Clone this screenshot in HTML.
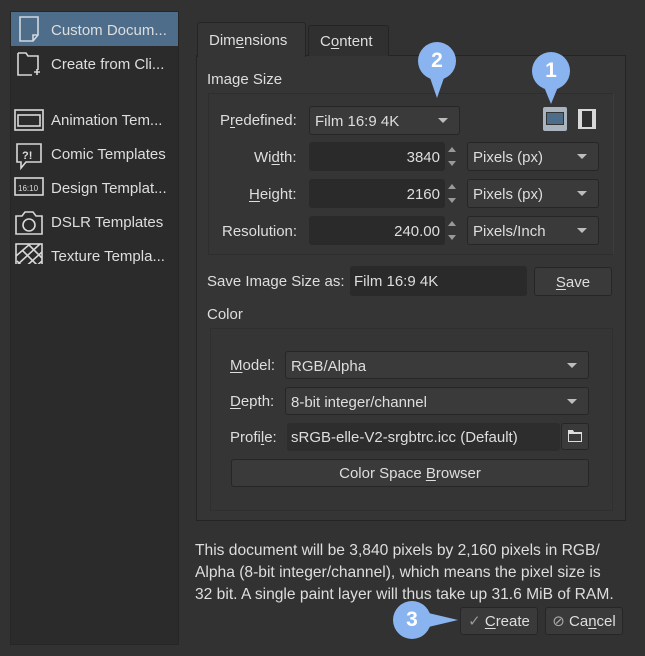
<!DOCTYPE html>
<html><head><meta charset="utf-8"><style>
*{box-sizing:border-box;margin:0;padding:0}
body{width:645px;height:656px;background:#323232;font-family:"Liberation Sans","DejaVu Sans",sans-serif;font-size:15px;color:#dedede;position:relative;overflow:hidden}
.a{position:absolute}
.t{position:absolute;white-space:nowrap;line-height:20px;margin-top:2px}
.inp{position:absolute;background:#2a2a2a;border-radius:3px}
.cmb{position:absolute;background:#3a3a3a;border:1px solid #262626;border-radius:3px;padding-left:5px;line-height:29px;white-space:nowrap}
.cmb:after{content:"";position:absolute;right:11px;top:11px;border-left:5px solid transparent;border-right:5px solid transparent;border-top:5px solid #bdbdbd}
.btn{position:absolute;background:#3a3a3a;border:1px solid #262626;border-radius:3px;text-align:center;line-height:28px}
.spin{position:absolute;width:14px;background:#353535}
.spin:before{content:"";position:absolute;left:3px;top:5px;border-left:4px solid transparent;border-right:4px solid transparent;border-bottom:5px solid #999}
.spin:after{content:"";position:absolute;left:3px;bottom:5px;border-left:4px solid transparent;border-right:4px solid transparent;border-top:5px solid #999}
u{text-decoration:underline;text-underline-offset:2px}
.lt{position:absolute;left:51px;white-space:nowrap;line-height:20px;margin-top:2px}
.callout{position:absolute;width:38px;height:38px;border-radius:50%;background:#8ab4f0;color:#fff;font-weight:bold;font-size:21px;text-align:center;line-height:38px}
</style></head><body>
<div class="a" style="left:10px;top:11px;width:169px;height:634px;background:#2b2b2b;border:1px solid #262626"></div>
<div class="a" style="left:11px;top:12px;width:167px;height:34px;background:#4d6d8a"></div>
<svg class="a" style="left:14px;top:14px" width="30" height="250" viewBox="0 0 30 250" fill="none" stroke="#d8d8d8" stroke-width="1.6">
<path d="M6 3h18v18l-5 6H6z" stroke="#d0d8e0"/><path d="M24 21h-5v6" stroke="#d0d8e0"/>
<path d="M4 39h8l2 3h10v14M4 39v22h14M20 58h6M23 55v6"/>
<rect x="1" y="96" width="28" height="20"/><rect x="4" y="101" width="22" height="11"/>
<path d="M3 130h24v18H12l-5 6v-6H3z"/><text x="8" y="145" font-size="11" fill="#ddd" stroke="none" font-weight="bold" font-family="Liberation Sans">?!</text>
<rect x="1" y="164" width="28" height="17"/><text x="4" y="177" font-size="8" fill="#ddd" stroke="none" font-family="Liberation Sans">16:10</text>
<path d="M2 202h6l3-4h8l3 4h6v18H2z"/><circle cx="15" cy="211" r="6"/>
<rect x="2" y="230" width="26" height="26"/><path d="M2 242l14-12M2 252l24-22M8 256l20-18M18 256l10-9M8 236l18 18M3 247l9 9M14 230l14 14"/>
</svg>
<div class="lt" style="top:19px">Custom Docum...</div>
<div class="lt" style="top:53px">Create from Cli...</div>
<div class="lt" style="top:109px">Animation Tem...</div>
<div class="lt" style="top:143px">Comic Templates</div>
<div class="lt" style="top:177px">Design Templat...</div>
<div class="lt" style="top:211px">DSLR Templates</div>
<div class="lt" style="top:245px">Texture Templa...</div>

<div class="a" style="left:196px;top:55px;width:430px;height:466px;background:#353535;border:1px solid #242424"></div>
<div class="a" style="left:197px;top:22px;width:109px;height:35px;background:#353535;border:1px solid #242424;border-bottom:none;border-radius:3px 3px 0 0"></div>
<div class="a" style="left:308px;top:25px;width:81px;height:31px;background:#303030;border:1px solid #242424;border-bottom:none;border-radius:3px 3px 0 0"></div>
<div class="t" style="left:209px;top:29px">Dim<u>e</u>nsions</div>
<div class="t" style="left:320px;top:30px">C<u>o</u>ntent</div>

<div class="t" style="left:207px;top:68px">Image Size</div>
<div class="a" style="left:208px;top:93px;width:406px;height:162px;border:1px solid #2e2e2e;border-right-color:#3d3d3d"></div>
<div class="t" style="left:220px;top:109px">P<u>r</u>edefined:</div>
<div class="cmb" style="left:309px;top:106px;width:151px;height:29px">Film 16:9 4K</div>
<div class="t" style="left:254px;top:146px">Wi<u>d</u>th:</div>
<div class="t" style="left:249px;top:183px"><u>H</u>eight:</div>
<div class="t" style="left:222px;top:220px">Resolution:</div>
<div class="inp" style="left:309px;top:142px;width:136px;height:29px;text-align:right;padding-right:5px;line-height:31px">3840</div>
<div class="inp" style="left:309px;top:179px;width:136px;height:29px;text-align:right;padding-right:5px;line-height:31px">2160</div>
<div class="inp" style="left:309px;top:216px;width:136px;height:29px;text-align:right;padding-right:5px;line-height:31px">240.00</div>
<div class="spin" style="left:445px;top:142px;height:29px"></div>
<div class="spin" style="left:445px;top:179px;height:29px"></div>
<div class="spin" style="left:445px;top:216px;height:29px"></div>
<div class="cmb" style="left:467px;top:142px;width:132px;height:29px">Pixels (px)</div>
<div class="cmb" style="left:467px;top:179px;width:132px;height:29px">Pixels (px)</div>
<div class="cmb" style="left:467px;top:216px;width:132px;height:29px">Pixels/Inch</div>
<div class="a" style="left:543px;top:107px;width:24px;height:24px;background:#a9b4bf;border-radius:2px"></div>
<div class="a" style="left:546px;top:112px;width:18px;height:13px;background:#4d6d8a;border:1px solid #333"></div>
<div class="a" style="left:578px;top:109px;width:18px;height:20px;background:#d8d8d8"></div>
<div class="a" style="left:582px;top:111px;width:10px;height:16px;background:#2e2e2e"></div>

<div class="t" style="left:207px;top:270px">Save Image Size as:</div>
<div class="inp" style="left:350px;top:266px;width:177px;height:30px;padding-left:4px;line-height:32px">Film 16:9 4K</div>
<div class="btn" style="left:534px;top:267px;width:78px;height:29px;line-height:30px"><u>S</u>ave</div>
<div class="t" style="left:207px;top:303px">Color</div>
<div class="a" style="left:210px;top:328px;width:403px;height:183px;border:1px solid #2f2f2f"></div>
<div class="t" style="left:230px;top:354px"><u>M</u>odel:</div>
<div class="t" style="left:230px;top:390px"><u>D</u>epth:</div>
<div class="t" style="left:230px;top:426px">Profi<u>l</u>e:</div>
<div class="cmb" style="left:285px;top:351px;width:304px;height:28px">RGB/Alpha</div>
<div class="cmb" style="left:285px;top:387px;width:304px;height:28px">8-bit integer/channel</div>
<div class="inp" style="left:287px;top:423px;width:273px;height:28px;background:#2d2d2d;padding-left:4px;line-height:29px;white-space:nowrap">sRGB-elle-V2-srgbtrc.icc (Default)</div>
<div class="btn" style="left:561px;top:423px;width:28px;height:27px"></div>
<svg class="a" style="left:567px;top:429px" width="16" height="14"><path d="M1 1h5l1 2h8v10H1z" fill="#ddd"/><rect x="2" y="5" width="12" height="7" fill="#3a3a3a"/></svg>
<div class="btn" style="left:231px;top:459px;width:358px;height:28px">Color Space <u>B</u>rowser</div>

<div class="a" style="left:195px;top:540px;width:445px;line-height:22px;font-size:15.6px">This document will be 3,840 pixels by 2,160 pixels in RGB/<br>Alpha (8-bit integer/channel), which means the pixel size is<br>32 bit. A single paint layer will thus take up 31.6 MiB of RAM.</div>
<div class="btn" style="left:460px;top:607px;width:78px;height:28px"><span style="color:#999">✓</span> <u>C</u>reate</div>
<div class="btn" style="left:545px;top:607px;width:78px;height:28px"><span style="color:#aaa">⊘</span> Ca<u>n</u>cel</div>

<svg class="a" style="left:0;top:0" width="645" height="656"><path d="M428 72L437 98L446 72Z" fill="#8ab4f0"/><path d="M542 82L551 104L560 82Z" fill="#8ab4f0"/><path d="M420 611L458 620L420 629Z" fill="#8ab4f0"/></svg>
<div class="callout" style="left:418px;top:42px">2</div>
<div class="callout" style="left:532px;top:52px">1</div>
<div class="callout" style="left:393px;top:601px">3</div>
</body></html>
